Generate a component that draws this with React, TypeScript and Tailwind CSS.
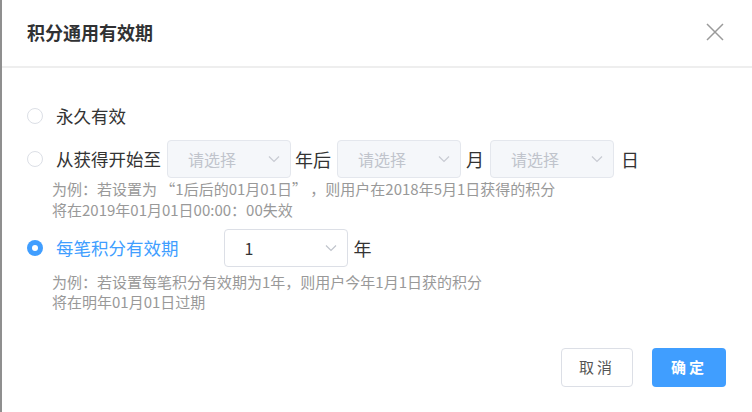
import { useState } from 'react';

const font = { fontFamily: '"Noto Sans CJK SC", "Noto Sans", sans-serif' };

function Chevron({ light }: { light?: boolean }) {
  return (
    <svg width="12" height="8" viewBox="0 0 12 8" fill="none">
      <path
        d="M1 1.5 L6 6.5 L11 1.5"
        stroke={light ? '#c8cbd2' : '#c0c4cc'}
        strokeWidth="1.2"
      />
    </svg>
  );
}

interface SelectProps {
  value?: string;
  disabled?: boolean;
  className?: string;
}

function Select({ value, disabled, className = '' }: SelectProps) {
  return (
    <div
      className={`flex items-center justify-between h-[38px] w-[124px] rounded-[4px] border pl-[20px] pr-[10px] ${
        disabled ? 'bg-[#f5f7fa] border-[#e4e7ed]' : 'bg-white border-[#dcdfe6]'
      } ${className}`}
    >
      <span className={`text-[16px] ${value ? 'text-[#333]' : 'text-[#c0c4cc]'}`}>
        {value ?? '请选择'}
      </span>
      <Chevron light={disabled} />
    </div>
  );
}

function Radio({ checked }: { checked?: boolean }) {
  return checked ? (
    <span className="flex items-center justify-center w-[16px] h-[16px] rounded-full bg-[#409eff]">
      <span className="w-[6px] h-[6px] rounded-full bg-white"></span>
    </span>
  ) : (
    <span className="w-[16px] h-[16px] rounded-full border border-[#dcdfe6] bg-white"></span>
  );
}

export default function App() {
  const [mode] = useState(3);

  return (
    <div
      className="w-[752px] h-[412px] bg-white border-l-2 border-[#8f8f8f] flex flex-col text-[#333]"
      style={font}
    >
      <div className="h-[68px] flex items-center justify-between pl-[25px] pr-[28px] border-b-2 border-[#eeeeee] shrink-0">
        <h2 className="text-[18px] font-semibold text-[#303133] -mt-[2px]">积分通用有效期</h2>
        <svg width="18" height="18" viewBox="0 0 18 18" className="-mt-[2px]">
          <path d="M1 1 L17 17 M17 1 L1 17" stroke="#9a9a9a" strokeWidth="1.5" />
        </svg>
      </div>

      <div className="flex-1 flex flex-col pl-[25px] pt-[29px]">
        <div className="flex items-center h-[38px]">
          <Radio checked={mode === 1} />
          <span className="ml-[13px] text-[17.5px]">永久有效</span>
        </div>

        <div className="flex items-center h-[38px] mt-[5px]">
          <Radio checked={mode === 2} />
          <span className="ml-[13px] text-[17.5px]">从获得开始至</span>
          <Select disabled className="ml-[6px]" />
          <span className="ml-[4px] mr-[6px] text-[18px]">年后</span>
          <Select disabled />
          <span className="ml-[5px] mr-[6px] text-[18px]">月</span>
          <Select disabled />
          <span className="ml-[7px] text-[18px]">日</span>
        </div>
        <div className="pl-[25px] text-[15px] leading-[21px] text-[#999]">
          <p>为例：若设置为 “1后后的01月01日” ，则用户在2018年5月1日获得的积分</p>
          <p>将在2019年01月01日00:00：00失效</p>
        </div>

        <div className="flex items-center h-[38px] mt-[9px]">
          <Radio checked={mode === 3} />
          <span className="ml-[13px] text-[17.5px] text-[#409eff]">每笔积分有效期</span>
          <Select value="1" className="ml-[45px]" />
          <span className="ml-[6px] text-[18px]">年</span>
        </div>
        <div className="pl-[25px] mt-[5px] text-[15px] leading-[20px] text-[#999]">
          <p>为例：若设置每笔积分有效期为1年，则用户今年1月1日获的积分</p>
          <p>将在明年01月01日过期</p>
        </div>
      </div>

      <div className="flex justify-end gap-[19px] pr-[26px] pb-[25px]">
        <button className="w-[72px] h-[39px] rounded-[4px] border border-[#dcdfe6] bg-white text-[15px] tracking-[3px] text-[#555]">
          取消
        </button>
        <button className="w-[74px] h-[39px] rounded-[4px] bg-[#409eff] text-[15px] font-semibold tracking-[3px] text-white">
          确定
        </button>
      </div>
    </div>
  );
}
